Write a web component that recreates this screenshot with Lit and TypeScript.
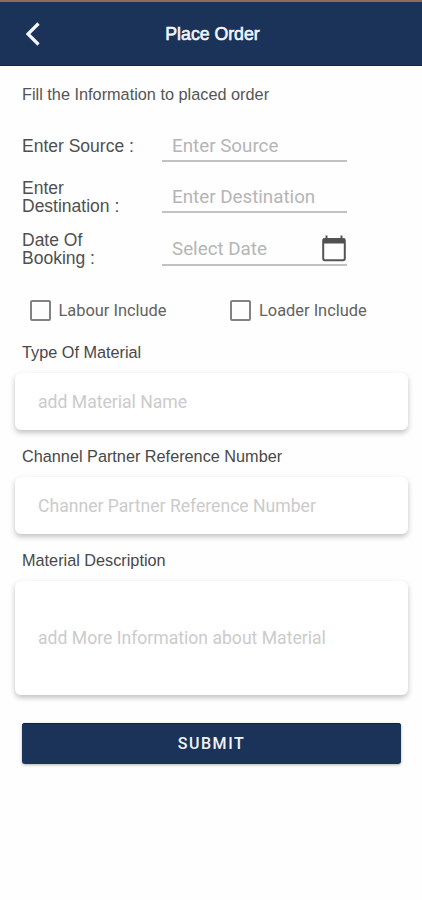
import { LitElement, html, css, svg } from "lit";
import { customElement, property } from "lit/decorators.js";

const calendar = svg`
  <path d="M5.500 0.500v4M20.500 0.500v4" stroke="#555" stroke-width="2" fill="none"/>
  <rect x="2.200" y="4" width="21.600" height="21.300" rx="1.800" fill="none" stroke="#555" stroke-width="2"/>
  <path d="M2 3.500h22v5H2z" fill="#505050"/>`;

@customElement("line-field")
export class LineField extends LitElement {
  @property() label = "";
  @property() hint = "";
  @property({ type: Boolean }) date = false;

  static styles = css`
    :host { display: flex; align-items: stretch; }
    .label {
      width: 140px; display: flex; align-items: center; padding-top: 2px; box-sizing: border-box;
      font: 17.5px/17.5px "Liberation Sans", Arial, sans-serif; color: #505050;
      white-space: pre-line;
    }
    .field {
      width: 185px; box-sizing: border-box; padding: 2px 0 0 10px;
      display: flex; align-items: center; justify-content: space-between;
      border-bottom: 2px solid #c2c2c2;
      font: 18.8px/22px Roboto, sans-serif; color: #b5b5b5;
    }
    .icon { width: 26px; height: 28px; display: block; }
  `;

  render() {
    return html`<div class="label">${this.label}</div>
      <div class="field">
        <span>${this.hint}</span>
        ${this.date ? html`<svg class="icon" viewBox="0 0 26 28">${calendar}</svg>` : ""}
      </div>`;
  }
}

@customElement("check-option")
export class CheckOption extends LitElement {
  @property() label = "";

  static styles = css`
    :host {
      display: flex; align-items: center; gap: 8px; width: 200.5px; flex: none;
      font: 16.4px/20px Roboto, sans-serif; color: #626262;
    }
    .box { width: 21px; height: 21px; box-sizing: border-box; border: 2px solid #828282; border-radius: 2px; }
  `;

  render() {
    return html`<div class="box"></div><span>${this.label}</span>`;
  }
}

@customElement("card-field")
export class CardField extends LitElement {
  @property() label = "";
  @property() hint = "";
  @property({ type: Boolean, reflect: true }) tall = false;

  static styles = css`
    :host { display: block; }
    .label {
      height: 31px; padding: 0 7px;
      font: 16.25px/20px "Liberation Sans", Arial, sans-serif; color: #484848;
    }
    .card {
      height: 57px; box-sizing: border-box; padding-left: 23px;
      display: flex; align-items: center;
      background: #fff; border-radius: 6px;
      box-shadow: 0 3px 5px rgba(0, 0, 0, 0.18), 0 2px 9px rgba(0, 0, 0, 0.07);
      font: 17.6px/22px Roboto, sans-serif; color: #cbcbcb;
    }
    :host([tall]) .card { height: 114px; }
  `;

  render() {
    return html`<div class="label">${this.label}</div>
      <div class="card">${this.hint}</div>`;
  }
}

@customElement("app-root")
export class AppRoot extends LitElement {
  static styles = css`
    :host { display: block; width: 422px; height: 900px; overflow: hidden; background: #fefefe; }
    .bar {
      height: 66px; box-sizing: border-box; padding-left: 25px;
      border-top: 2px solid #8e6b5b; border-bottom: 1px solid #0c2850;
      background: #1b3358; color: #f4f6fa;
      display: grid; grid-template-columns: 16px 1fr 38px; align-items: center;
    }
    .back { width: 16px; height: 24px; display: block; }
    .title {
      text-align: center; font: 17.7px/22px "Liberation Sans", Arial, sans-serif;
      -webkit-text-stroke: 0.6px #f4f6fa;
    }
    .intro {
      padding: 18px 22px 0; height: 45px; box-sizing: content-box;
      font: 16.3px/20px "Liberation Sans", Arial, sans-serif; color: #555;
    }
    .lines { padding-left: 22px; display: grid; grid-template-rows: 33px 51px 53px; }
    .lines line-field:nth-child(1) { height: 33px; }
    .lines line-field:nth-child(2) { height: 33px; align-self: end; }
    .lines line-field:nth-child(3) { height: 35px; align-self: end; }
    .checks { display: flex; padding: 34px 0 0 29.5px; height: 42px; align-items: flex-start; }
    .cards { padding: 0 14px 0 15px; display: flex; flex-direction: column; gap: 16px; }
    .submit {
      margin: 28px 21px 0 22px; height: 41px; border-radius: 3px;
      display: flex; align-items: center; justify-content: center;
      background: #1b3358; color: #f2f4f8;
      box-shadow: inset 0 1px 0 #0b2348, 0 1px 3px rgba(0, 0, 0, 0.3);
      font: 500 16px/20px Roboto, sans-serif; letter-spacing: 1.55px;
    }
  `;

  render() {
    return html`
      <div class="bar">
        <svg class="back" viewBox="0 0 16 24">
          <path d="M13.500 1.500L3 12l10.500 10.500" fill="none" stroke="#f4f6fa" stroke-width="3.200"/>
        </svg>
        <div class="title">Place Order</div>
      </div>
      <div class="intro">Fill the Information to placed order</div>
      <div class="lines">
        <line-field label="Enter Source :" hint="Enter Source"></line-field>
        <line-field label=${"Enter\nDestination :"} hint="Enter Destination"></line-field>
        <line-field label=${"Date Of\nBooking :"} hint="Select Date" date></line-field>
      </div>
      <div class="checks">
        <check-option label="Labour Include"></check-option>
        <check-option label="Loader Include"></check-option>
      </div>
      <div class="cards">
        <card-field label="Type Of Material" hint="add Material Name"></card-field>
        <card-field label="Channel Partner Reference Number" hint="Channer Partner Reference Number"></card-field>
        <card-field tall label="Material Description" hint="add More Information about Material"></card-field>
      </div>
      <div class="submit">SUBMIT</div>
    `;
  }
}
